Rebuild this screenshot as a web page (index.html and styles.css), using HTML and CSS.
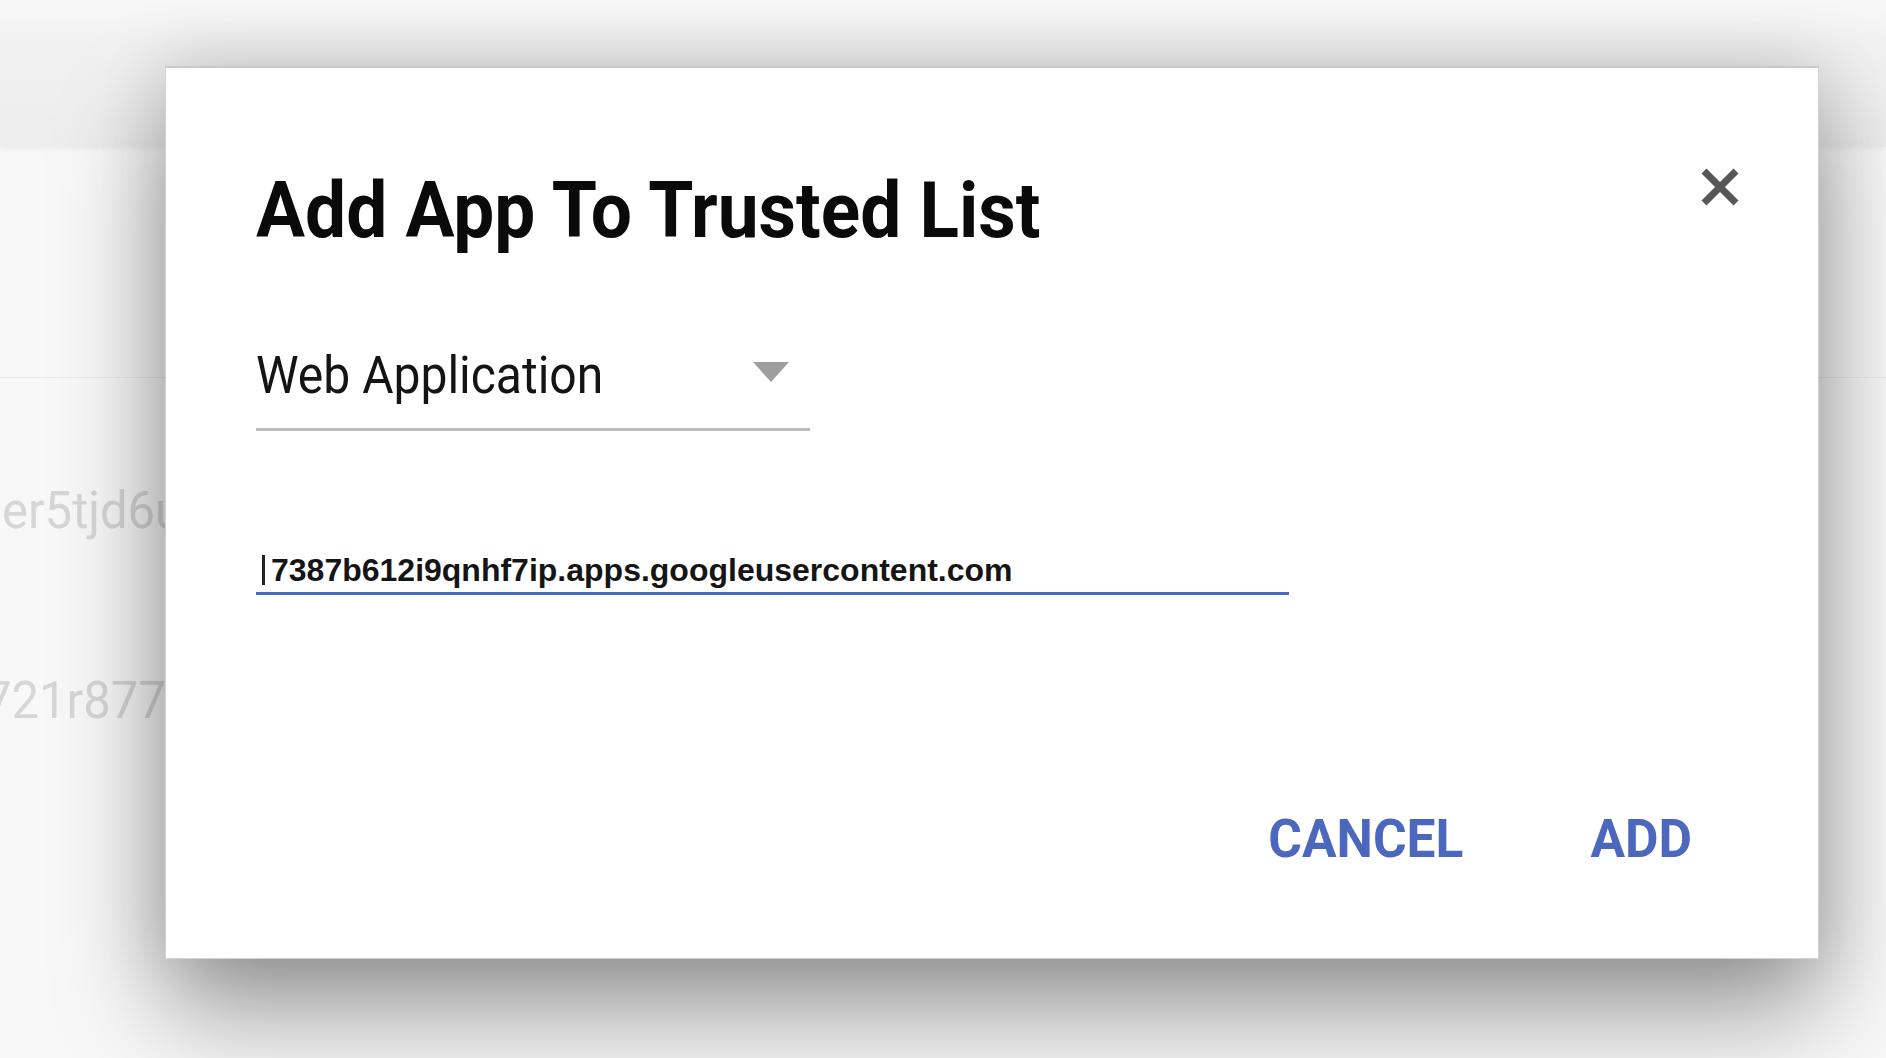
FILE: index.html
```html
<!DOCTYPE html>
<html lang="en">
<head>
<meta charset="utf-8">
<title>Add App To Trusted List</title>
<link rel="stylesheet" href="styles.css">
</head>
<body>
<div class="page">
  <header class="topbar"></header>
  <div class="band"></div>
  <div class="ids">
    <span class="cell-id">er5tjd6u</span>
    <span class="cell-id cell-id-cut">721r877</span>
  </div>
</div>

<div class="dialog" role="dialog" aria-label="Add App To Trusted List">
  <div class="dialog-head">
    <h1 class="dialog-title">Add App To Trusted List</h1>
    <button class="close-btn" aria-label="Close">
      <svg class="close-icon" viewBox="0 0 62 62" width="62" height="62"><path d="M15 15L47 47M47 15L15 47"/></svg>
    </button>
  </div>

  <div class="select">
    <span class="select-value">Web Application</span>
    <span class="select-arrow"></span>
  </div>

  <div class="field">
    <span class="caret"></span>
    <span class="field-value">7387b612i9qnhf7ip.apps.googleusercontent.com</span>
  </div>

  <div class="actions">
    <button class="btn">CANCEL</button>
    <button class="btn">ADD</button>
  </div>
</div>
</body>
</html>
```

FILE: styles.css
```css
body {
  margin: 0;
  width: 1886px;
  height: 1058px;
  overflow: hidden;
  position: relative;
  background: #f8f8f8;
  font-family: Roboto, "Noto Sans", sans-serif;
}

.topbar {
  height: 147px;
  background: linear-gradient(#f8f8f8 0, #f1f1f1 45px, #ededed 147px);
  box-shadow: 0 2px 6px rgba(0, 0, 0, 0.05);
}

.band {
  height: 230px;
  border-bottom: 1px solid #ebebeb;
}

.ids {
  display: flex;
  flex-direction: column;
  align-items: flex-start;
  gap: 142px;
  padding-top: 109px;
}

.cell-id {
  font-size: 49px;
  line-height: 48px;
  color: #d6d6d6;
  margin-left: 2px;
  transform: scaleY(1.06);
}

.cell-id-cut {
  margin-left: -16px;
}

.dialog {
  position: absolute;
  left: 165px;
  top: 66px;
  width: 1654px;
  height: 893px;
  box-sizing: border-box;
  background: #ffffff;
  border: 1px solid #d3d3d3;
  border-top: 2px solid #c9c9c9;
  box-shadow: 0 50px 100px rgba(0, 0, 0, 0.4), 0 0 60px 6px rgba(0, 0, 0, 0.1);
  padding: 0 67px 0 90px;
  display: flex;
  flex-direction: column;
}

.dialog-head {
  display: flex;
  justify-content: space-between;
  align-items: flex-start;
  margin-top: 88px;
}

.dialog-title {
  margin: 18px 0 0;
  font-size: 73px;
  line-height: 72px;
  font-weight: 700;
  color: #0a0a0a;
  transform: scaleY(1.07);
  transform-origin: left center;
}

.close-btn {
  width: 62px;
  height: 62px;
  padding: 0;
  border: 0;
  background: none;
}

.close-icon {
  display: block;
  fill: none;
  stroke: #575757;
  stroke-width: 7;
}

.select {
  margin-top: 106px;
  width: 554px;
  box-sizing: border-box;
  display: flex;
  align-items: center;
  justify-content: space-between;
  padding: 0 21px 28px 0;
  border-bottom: 3px solid #bcbcbc;
}

.select-value {
  font-size: 48px;
  line-height: 48px;
  color: #141414;
  transform: scaleY(1.08);
  transform-origin: left center;
}

.select-arrow {
  width: 0;
  height: 0;
  border-left: 18px solid transparent;
  border-right: 18px solid transparent;
  border-top: 20px solid #9e9e9e;
  margin-bottom: 8px;
}

.field {
  margin-top: 123px;
  width: 1033px;
  box-sizing: border-box;
  display: flex;
  align-items: center;
  padding: 0 0 6px 6px;
  border-bottom: 3px solid #4b68be;
}

.caret {
  width: 3px;
  height: 30px;
  background: #222222;
  margin-right: 6px;
}

.field-value {
  font-family: "Liberation Sans", Arial, sans-serif;
  font-weight: 700;
  font-size: 32px;
  line-height: 32px;
  color: #151515;
}

.actions {
  margin-top: 207px;
  margin-right: 43px;
  display: flex;
  justify-content: flex-end;
  gap: 95px;
}

.btn {
  font-family: Roboto, "Noto Sans", sans-serif;
  font-weight: 700;
  font-size: 51.5px;
  line-height: 50px;
  padding: 12px 16px;
  border: 0;
  background: none;
  color: #4b68be;
  transform: scaleY(1.06);
}
```
